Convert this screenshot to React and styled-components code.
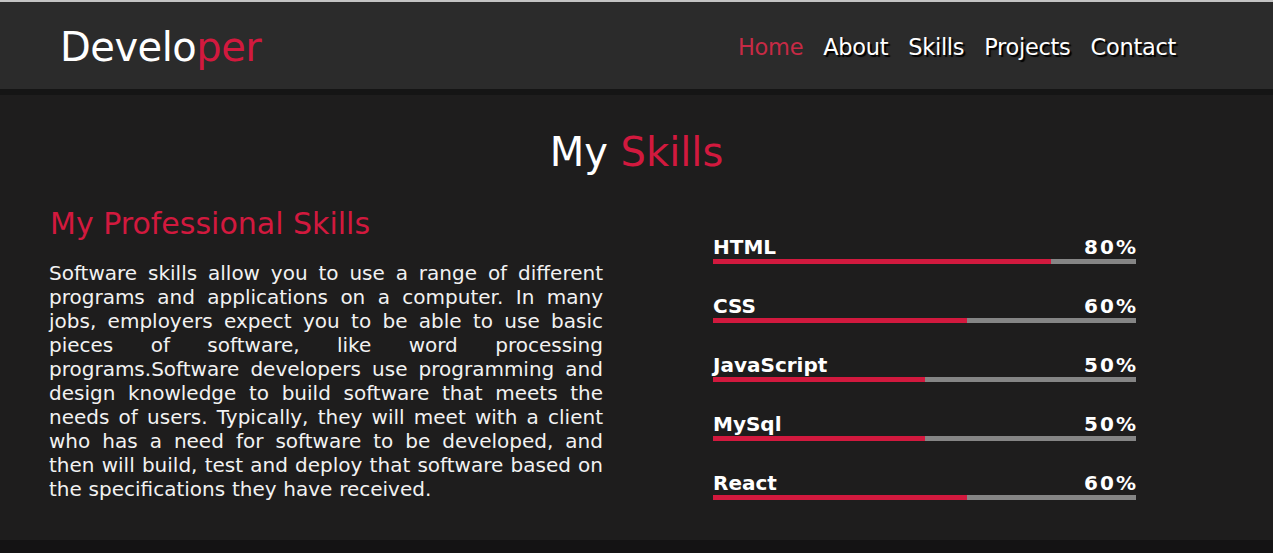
import React from "react";
import styled, { createGlobalStyle } from "styled-components";

const GlobalStyle = createGlobalStyle`
  html, body {
    margin: 0;
    padding: 0;
    background: #141314;
    font-family: "DejaVu Sans", Verdana, sans-serif;
  }
`;

const Page = styled.div`
  border-top: 2px solid #c4c4c4;
  min-height: 551px;
  background: #141314;
`;

const Header = styled.header`
  height: 87px;
  background: #2b2b2b;
  border-bottom: 6px solid #151515;
  display: flex;
  align-items: center;
  justify-content: space-between;
  padding: 0 97px 0 60px;
`;

const Logo = styled.div`
  font-size: 40px;
  color: #ffffff;
  letter-spacing: -0.5px;
  padding-top: 2px;
  span {
    color: #d2193e;
  }
`;

const Nav = styled.nav`
  display: flex;
  gap: 20px;
  padding-top: 2px;
`;

const NavLink = styled.a`
  font-size: 22.5px;
  letter-spacing: -0.3px;
  color: ${(p) => (p.active ? "#c72a45" : "#ffffff")};
  text-shadow: ${(p) => (p.active ? "none" : "2px 2px 1px #000")};
  text-decoration: none;
  cursor: pointer;
`;

const Section = styled.section`
  background: #1e1d1d;
  height: 445px;
  box-sizing: border-box;
  padding-top: 31px;
`;

const Title = styled.h1`
  margin: 0;
  text-align: center;
  font-weight: normal;
  font-size: 40px;
  line-height: 52px;
  color: #ffffff;
  span {
    color: #d2193e;
  }
`;

const Columns = styled.div`
  display: grid;
  grid-template-columns: 554px 423px;
  column-gap: 110px;
  padding-left: 49px;
  margin-top: 26px;
`;

const Subtitle = styled.h2`
  margin: 0 0 17px 1px;
  font-weight: normal;
  font-size: 30px;
  line-height: 40px;
  color: #d2193e;
`;

const Paragraph = styled.p`
  margin: 0;
  font-size: 20px;
  line-height: 24px;
  word-spacing: 0.4px;
  color: #f2f2f2;
  text-align: justify;
`;

const Bars = styled.div`
  display: flex;
  flex-direction: column;
  gap: 31px;
  padding-top: 32px;
`;

const SkillRow = styled.div`
  display: flex;
  flex-direction: column;
`;

const SkillHead = styled.div`
  display: flex;
  justify-content: space-between;
  font-weight: bold;
  font-size: 20px;
  line-height: 22px;
  color: #ffffff;
`;

const Percent = styled.span`
  letter-spacing: 2px;
  margin-right: -2px;
`;

const Track = styled.div`
  height: 5px;
  background: #858585;
  margin-top: 1px;
`;

const Fill = styled.div`
  height: 100%;
  background: #d2193e;
`;

const skills = [
  { name: "HTML", value: 80 },
  { name: "CSS", value: 60 },
  { name: "JavaScript", value: 50 },
  { name: "MySql", value: 50 },
  { name: "React", value: 60 },
];

const links = ["Home", "About", "Skills", "Projects", "Contact"];

export default function App() {
  return (
    <>
      <GlobalStyle />
      <Page>
        <Header>
          <Logo>
            Develo<span>per</span>
          </Logo>
          <Nav>
            {links.map((l) => (
              <NavLink key={l} active={l === "Home" ? 1 : 0}>
                {l}
              </NavLink>
            ))}
          </Nav>
        </Header>

        <Section>
          <Title>
            My <span>Skills</span>
          </Title>
          <Columns>
            <div>
              <Subtitle>My Professional Skills</Subtitle>
              <Paragraph>
                Software skills allow you to use a range of different programs
                and applications on a computer. In many jobs, employers expect
                you to be able to use basic pieces of software, like word
                processing programs.Software developers use programming and
                design knowledge to build software that meets the needs of
                users. Typically, they will meet with a client who has a need
                for software to be developed, and then will build, test and
                deploy that software based on the specifications they have
                received.
              </Paragraph>
            </div>
            <Bars>
              {skills.map((s) => (
                <SkillRow key={s.name}>
                  <SkillHead>
                    <span>{s.name}</span>
                    <Percent>{s.value}%</Percent>
                  </SkillHead>
                  <Track>
                    <Fill style={{ width: `${s.value}%` }} />
                  </Track>
                </SkillRow>
              ))}
            </Bars>
          </Columns>
        </Section>
      </Page>
    </>
  );
}
